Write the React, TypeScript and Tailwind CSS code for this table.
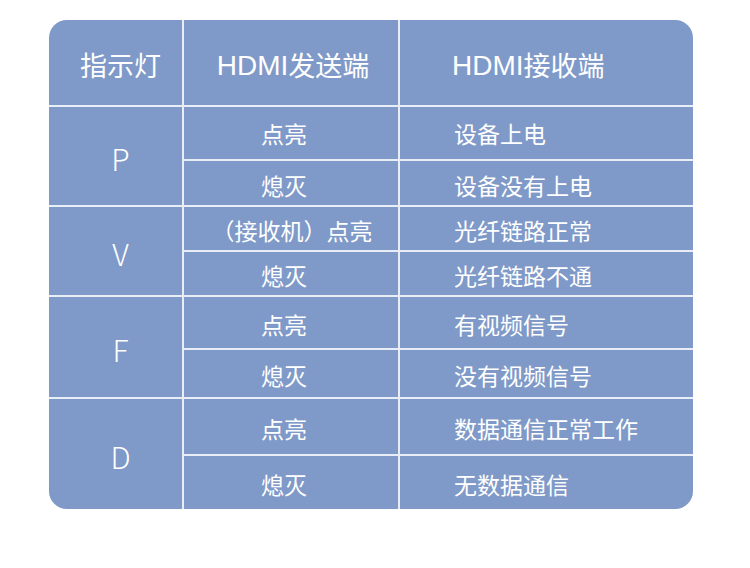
import React from "react";

type Row = { led: string; send: [string, string]; recv: [string, string]; shift: [boolean, boolean]; top: string };

const rows: Row[] = [
  { led: "P", send: ["点亮", "熄灭"], recv: ["设备上电", "设备没有上电"], shift: [true, true], top: "pt-[0px]" },
  { led: "V", send: ["（接收机）点亮", "熄灭"], recv: ["光纤链路正常", "光纤链路不通"], shift: [false, true], top: "pt-[4px]" },
  { led: "F", send: ["点亮", "熄灭"], recv: ["有视频信号", "没有视频信号"], shift: [true, true], top: "pt-[4px]" },
  { led: "D", send: ["点亮", "熄灭"], recv: ["数据通信正常工作", "无数据通信"], shift: [true, true], top: "pt-[4px]" },
];

const cell = "bg-[#7f9ac8] flex items-center text-white";
const latin = "font-['Liberation_Sans'] text-[28px]";

const App = () => {
  return (
    <div
      className="w-[750px] h-[568px] bg-white pt-[20px] pl-[49px]"
      style={{ fontFamily: '"Noto Sans CJK SC", "Noto Sans", sans-serif' }}
    >
      <div className="w-[644px] grid grid-cols-[133px_214px_293px] grid-rows-[85px_52px_44px_43px_43px_51px_47px_55px_53px] gap-[2px] bg-[#e9edf6] rounded-[18px] overflow-hidden">
        {/* Header */}
        <div className={`${cell} justify-center pl-[10px] pt-[6px] text-[27px]`}>指示灯</div>
        <div className={`${cell} justify-center pl-[4px] pt-[6px] text-[27px]`}>
          <span className={latin}>HDMI</span>发送端
        </div>
        <div className={`${cell} pl-[52px] pt-[6px] text-[27px]`}>
          <span className={latin}>HDMI</span>接收端
        </div>

        {rows.map((r) => (
          <React.Fragment key={r.led}>
            <div className={`${cell} row-span-2 justify-center pl-[10px] pt-[4px] text-[30px] font-light`}>
              {r.led}
            </div>
            <div className={`${cell} justify-center ${r.top} text-[23px] ${r.shift[0] ? "pr-[14px]" : "pl-[2px]"}`}>
              {r.send[0]}
            </div>
            <div className={`${cell} pl-[54px] ${r.top} text-[23px]`}>{r.recv[0]}</div>
            <div className={`${cell} justify-center pt-[4px] text-[23px] ${r.shift[1] ? "pr-[14px]" : ""}`}>
              {r.send[1]}
            </div>
            <div className={`${cell} pl-[54px] pt-[4px] text-[23px]`}>{r.recv[1]}</div>
          </React.Fragment>
        ))}
      </div>
    </div>
  );
};

export default App;
